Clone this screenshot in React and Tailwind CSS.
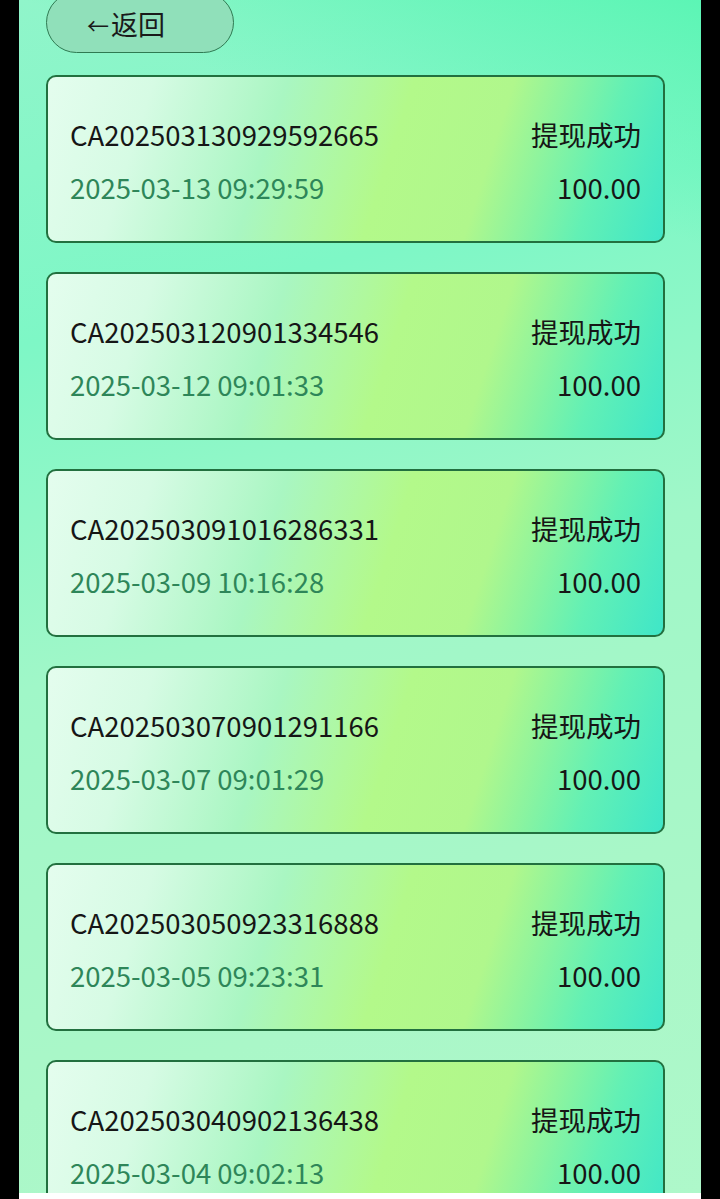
import React from "react";

const rows = [
  ["CA202503130929592665", "2025-03-13 09:29:59"],
  ["CA202503120901334546", "2025-03-12 09:01:33"],
  ["CA202503091016286331", "2025-03-09 10:16:28"],
  ["CA202503070901291166", "2025-03-07 09:01:29"],
  ["CA202503050923316888", "2025-03-05 09:23:31"],
  ["CA202503040902136438", "2025-03-04 09:02:13"],
];

export default function App() {
  return (
    <div
      className="flex h-[1199px] w-[720px] overflow-hidden bg-black"
      style={{ fontFamily: '"Noto Sans CJK SC", "Noto Sans", sans-serif' }}
    >
      <div className="w-[19px] shrink-0 bg-black" />
      <div className="relative flex w-[682px] shrink-0 flex-col bg-[linear-gradient(165deg,#90f5ca_0%,#7ef7c6_25%,#a0f7c8_50%,#aaf7c8_80%,#aef8ca_100%)]">
        <div className="pointer-events-none absolute inset-x-0 top-0 h-[300px] bg-[linear-gradient(200deg,#5cf5b5_0%,rgba(92,245,181,0)_45%)]" />
        <div className="relative flex-1 overflow-hidden px-[27px]">
          <button className="-mt-[8px] flex h-[61px] w-[188px] items-center rounded-full border border-[#2f7a52] bg-[#90e0ba] pl-[40px] pt-[2px] text-[27px] leading-none text-[#1a1a1a]">
            <span className="mr-[2px] text-[22px] leading-none">←</span>
            <span>返回</span>
          </button>
          <div className="mt-[22px] flex flex-col gap-[29px]">
            {rows.map(([id, time]) => (
              <div
                key={id}
                className="flex h-[168px] w-[619px] shrink-0 flex-col justify-center gap-[23px] rounded-[10px] border-[2px] border-[#22703f] bg-[linear-gradient(108deg,#e4fdee_0%,#d6fbe4_16%,#a9f6c2_36%,#b3f98a_55%,#b0f78c_70%,#62f0b5_87%,#3fe6c8_100%)] px-[22px] pt-[2px]"
              >
                <div className="flex items-center justify-between text-[27.5px] leading-[30px] text-[#161616]">
                  <span>{id}</span>
                  <span>提现成功</span>
                </div>
                <div className="flex items-center justify-between text-[27.5px] leading-[30px]">
                  <span className="text-[#2e8659]">{time}</span>
                  <span className="text-[#161616]">100.00</span>
                </div>
              </div>
            ))}
          </div>
        </div>
        <div className="relative h-[6px] shrink-0 bg-white" />
      </div>
      <div className="flex-1 bg-black" />
    </div>
  );
}
